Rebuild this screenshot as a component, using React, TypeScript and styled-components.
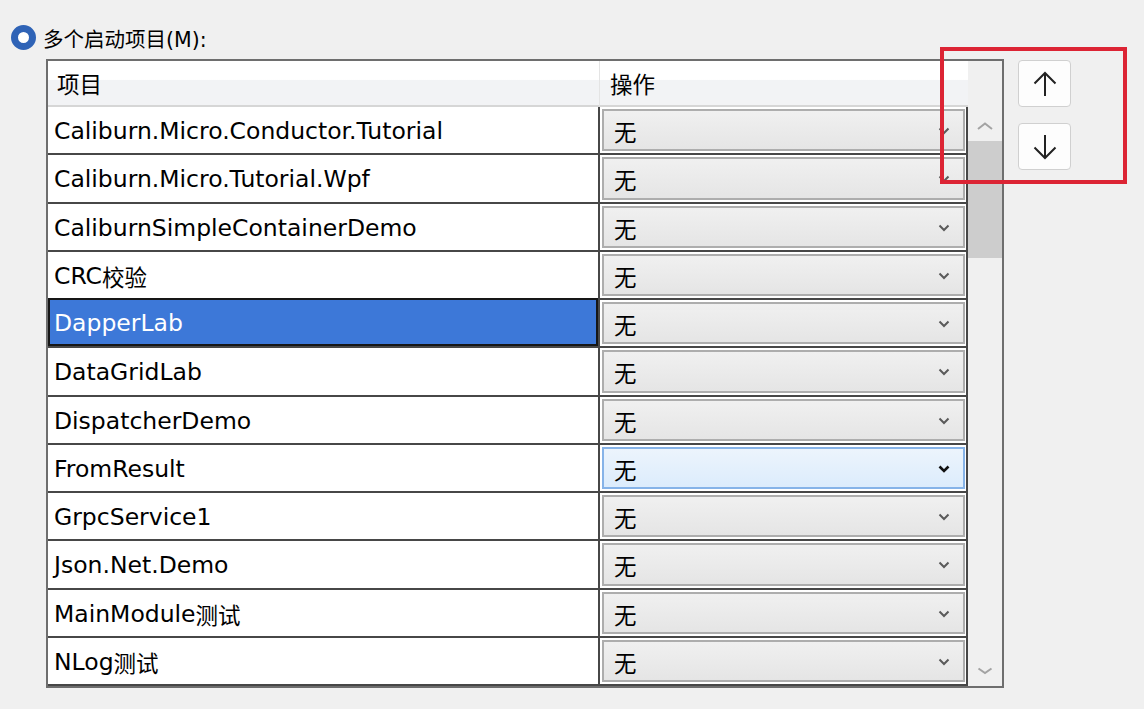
import React from 'react';
import styled, { createGlobalStyle } from 'styled-components';

const GlobalStyle = createGlobalStyle`
  html, body {
    margin: 0;
    padding: 0;
    background: #f0f0f0;
  }
  body {
    font-family: "DejaVu Sans", "Noto Sans CJK SC", sans-serif;
    color: #000;
  }
  * {
    box-sizing: border-box;
  }
`;

const Page = styled.div`
  position: relative;
  width: 1144px;
  height: 709px;
  padding: 25px 0 0 11px;
  overflow: hidden;
`;

const RadioRow = styled.label`
  display: flex;
  align-items: center;
  gap: 7px;
  height: 25px;
  font-size: 20.5px;
`;

const RadioDot = styled.span`
  width: 25px;
  height: 25px;
  border-radius: 50%;
  border: 7.5px solid #2f63b6;
  background: #fff;
`;

const MainRow = styled.div`
  display: flex;
  align-items: flex-start;
  margin: 9px 0 0 35px;
`;

const Grid = styled.div`
  width: 958px;
  height: 629px;
  border: 2px solid #6e6e6e;
  background: #f0f0f0;
  display: grid;
  grid-template-columns: 552px 368px 34px;
  grid-template-rows: 46px 579px;
`;

const HeaderCell = styled.div<{ $divider?: boolean }>`
  display: flex;
  align-items: center;
  padding-left: ${p => (p.$divider ? 9 : 10)}px;
  font-size: 22.5px;
  background: linear-gradient(#ffffff 0%, #ffffff 42%, #f2f3f5 43%, #f2f3f5 100%);
  border-bottom: 2px solid #d6d6d6;
  border-right: ${p => (p.$divider ? '1px solid #e4e4e4' : 'none')};
`;

const Rows = styled.div`
  grid-column: 1 / 3;
  display: grid;
  grid-template-rows: repeat(12, 1fr);
`;

const Row = styled.div`
  display: grid;
  grid-template-columns: 552px 368px;
  background: #fff;
  border-bottom: 2px solid #474747;
  min-height: 0;
`;

const NameCell = styled.div<{ $selected?: boolean }>`
  display: flex;
  align-items: center;
  padding: 2px 0 0 6px;
  font-size: 23.5px;
  white-space: nowrap;
  border-right: 2px solid #474747;
  background: ${p => (p.$selected ? '#3d78d8' : '#fff')};
  color: ${p => (p.$selected ? '#fff' : '#000')};
  box-shadow: ${p => (p.$selected ? 'inset 0 0 0 2px #161616' : 'none')};
  margin-top: ${p => (p.$selected ? '-2px' : '0')};
`;

const Cjk = styled.span`
  font-size: 22.5px;
`;

const ComboCell = styled.div`
  padding: 2px 1px 2px 2px;
  border-right: 2px solid #474747;
  min-height: 0;
`;

const Combo = styled.div<{ $hot?: boolean }>`
  height: 100%;
  display: flex;
  align-items: center;
  justify-content: space-between;
  padding: 2px 13px 0 10px;
  font-size: 22.5px;
  border: 2px solid ${p => (p.$hot ? '#86b3e8' : '#adadad')};
  background: ${p =>
    p.$hot
      ? 'linear-gradient(#ecf4fc, #dcecfc)'
      : 'linear-gradient(#f0f0f0, #e5e5e5)'};
`;

const ScrollBar = styled.div`
  display: flex;
  flex-direction: column;
  background: #f0f0f0;
`;

const ScrollArrow = styled.div`
  height: 34px;
  display: flex;
  align-items: center;
  justify-content: center;
  padding-top: 3px;
`;

const ScrollThumb = styled.div`
  height: 117px;
  background: #cdcdcd;
`;

const Spacer = styled.div`
  flex: 1;
`;

const SideButtons = styled.div`
  display: flex;
  flex-direction: column;
  gap: 16px;
  margin: 1px 0 0 14px;
`;

const MoveButton = styled.button`
  width: 53px;
  height: 47px;
  padding: 0;
  display: flex;
  align-items: center;
  justify-content: center;
  background: #fdfdfd;
  border: 1px solid #d0d0d0;
  border-radius: 4px;
`;

const Highlight = styled.div`
  position: absolute;
  left: 940px;
  top: 47px;
  width: 187px;
  height: 137px;
  border: 4px solid #dc2434;
  pointer-events: none;
`;

const Chevron = ({ color, up, width = 2, size = 12 }: { color: string; up?: boolean; width?: number; size?: number }) => (
  <svg width={size} height="8" viewBox={`0 0 ${size} 8`}>
    <path
      d={up ? `M1 7 L${size / 2} 1.5 L${size - 1} 7` : `M1.5 1.5 L${size / 2} 6 L${size - 1.5} 1.5`}
      fill="none"
      stroke={color}
      strokeWidth={width}
    />
  </svg>
);

const Arrow = ({ down }: { down?: boolean }) => (
  <svg width="24" height="26" viewBox="0 0 24 26" style={{ transform: down ? 'rotate(180deg)' : undefined }}>
    <path d="M12 2 L12 25 M1.5 12.5 L12 2 L22.5 12.5" fill="none" stroke="#222" strokeWidth="2" />
  </svg>
);

const projects = [
  'Caliburn.Micro.Conductor.Tutorial',
  'Caliburn.Micro.Tutorial.Wpf',
  'CaliburnSimpleContainerDemo',
  'CRC校验',
  'DapperLab',
  'DataGridLab',
  'DispatcherDemo',
  'FromResult',
  'GrpcService1',
  'Json.Net.Demo',
  'MainModule测试',
  'NLog测试',
];

// split a name into latin and CJK runs so the CJK part keeps its own size
const renderName = (name: string) =>
  name.split(/([\u4e00-\u9fff]+)/).filter(Boolean).map((part, i) =>
    /[\u4e00-\u9fff]/.test(part) ? <Cjk key={i}>{part}</Cjk> : <span key={i}>{part}</span>
  );

export default function App() {
  return (
    <Page>
      <GlobalStyle />
      <RadioRow>
        <RadioDot />
        多个启动项目(M):
      </RadioRow>
      <MainRow>
        <Grid>
          <HeaderCell $divider>项目</HeaderCell>
          <HeaderCell>操作</HeaderCell>
          <div />
          <Rows>
            {projects.map((name, i) => (
              <Row key={name}>
                <NameCell $selected={i === 4}>{renderName(name)}</NameCell>
                <ComboCell>
                  <Combo $hot={i === 7}>
                    无
                    {i === 7 ? <Chevron color="#111" width={2.6} /> : <Chevron color="#5a5a5a" />}
                  </Combo>
                </ComboCell>
              </Row>
            ))}
          </Rows>
          <ScrollBar>
            <ScrollArrow>
              <Chevron color="#a3a3a3" up size={16} />
            </ScrollArrow>
            <ScrollThumb />
            <Spacer />
            <ScrollArrow>
              <Chevron color="#a3a3a3" size={16} />
            </ScrollArrow>
          </ScrollBar>
        </Grid>
        <SideButtons>
          <MoveButton>
            <Arrow />
          </MoveButton>
          <MoveButton>
            <Arrow down />
          </MoveButton>
        </SideButtons>
      </MainRow>
      <Highlight />
    </Page>
  );
}
